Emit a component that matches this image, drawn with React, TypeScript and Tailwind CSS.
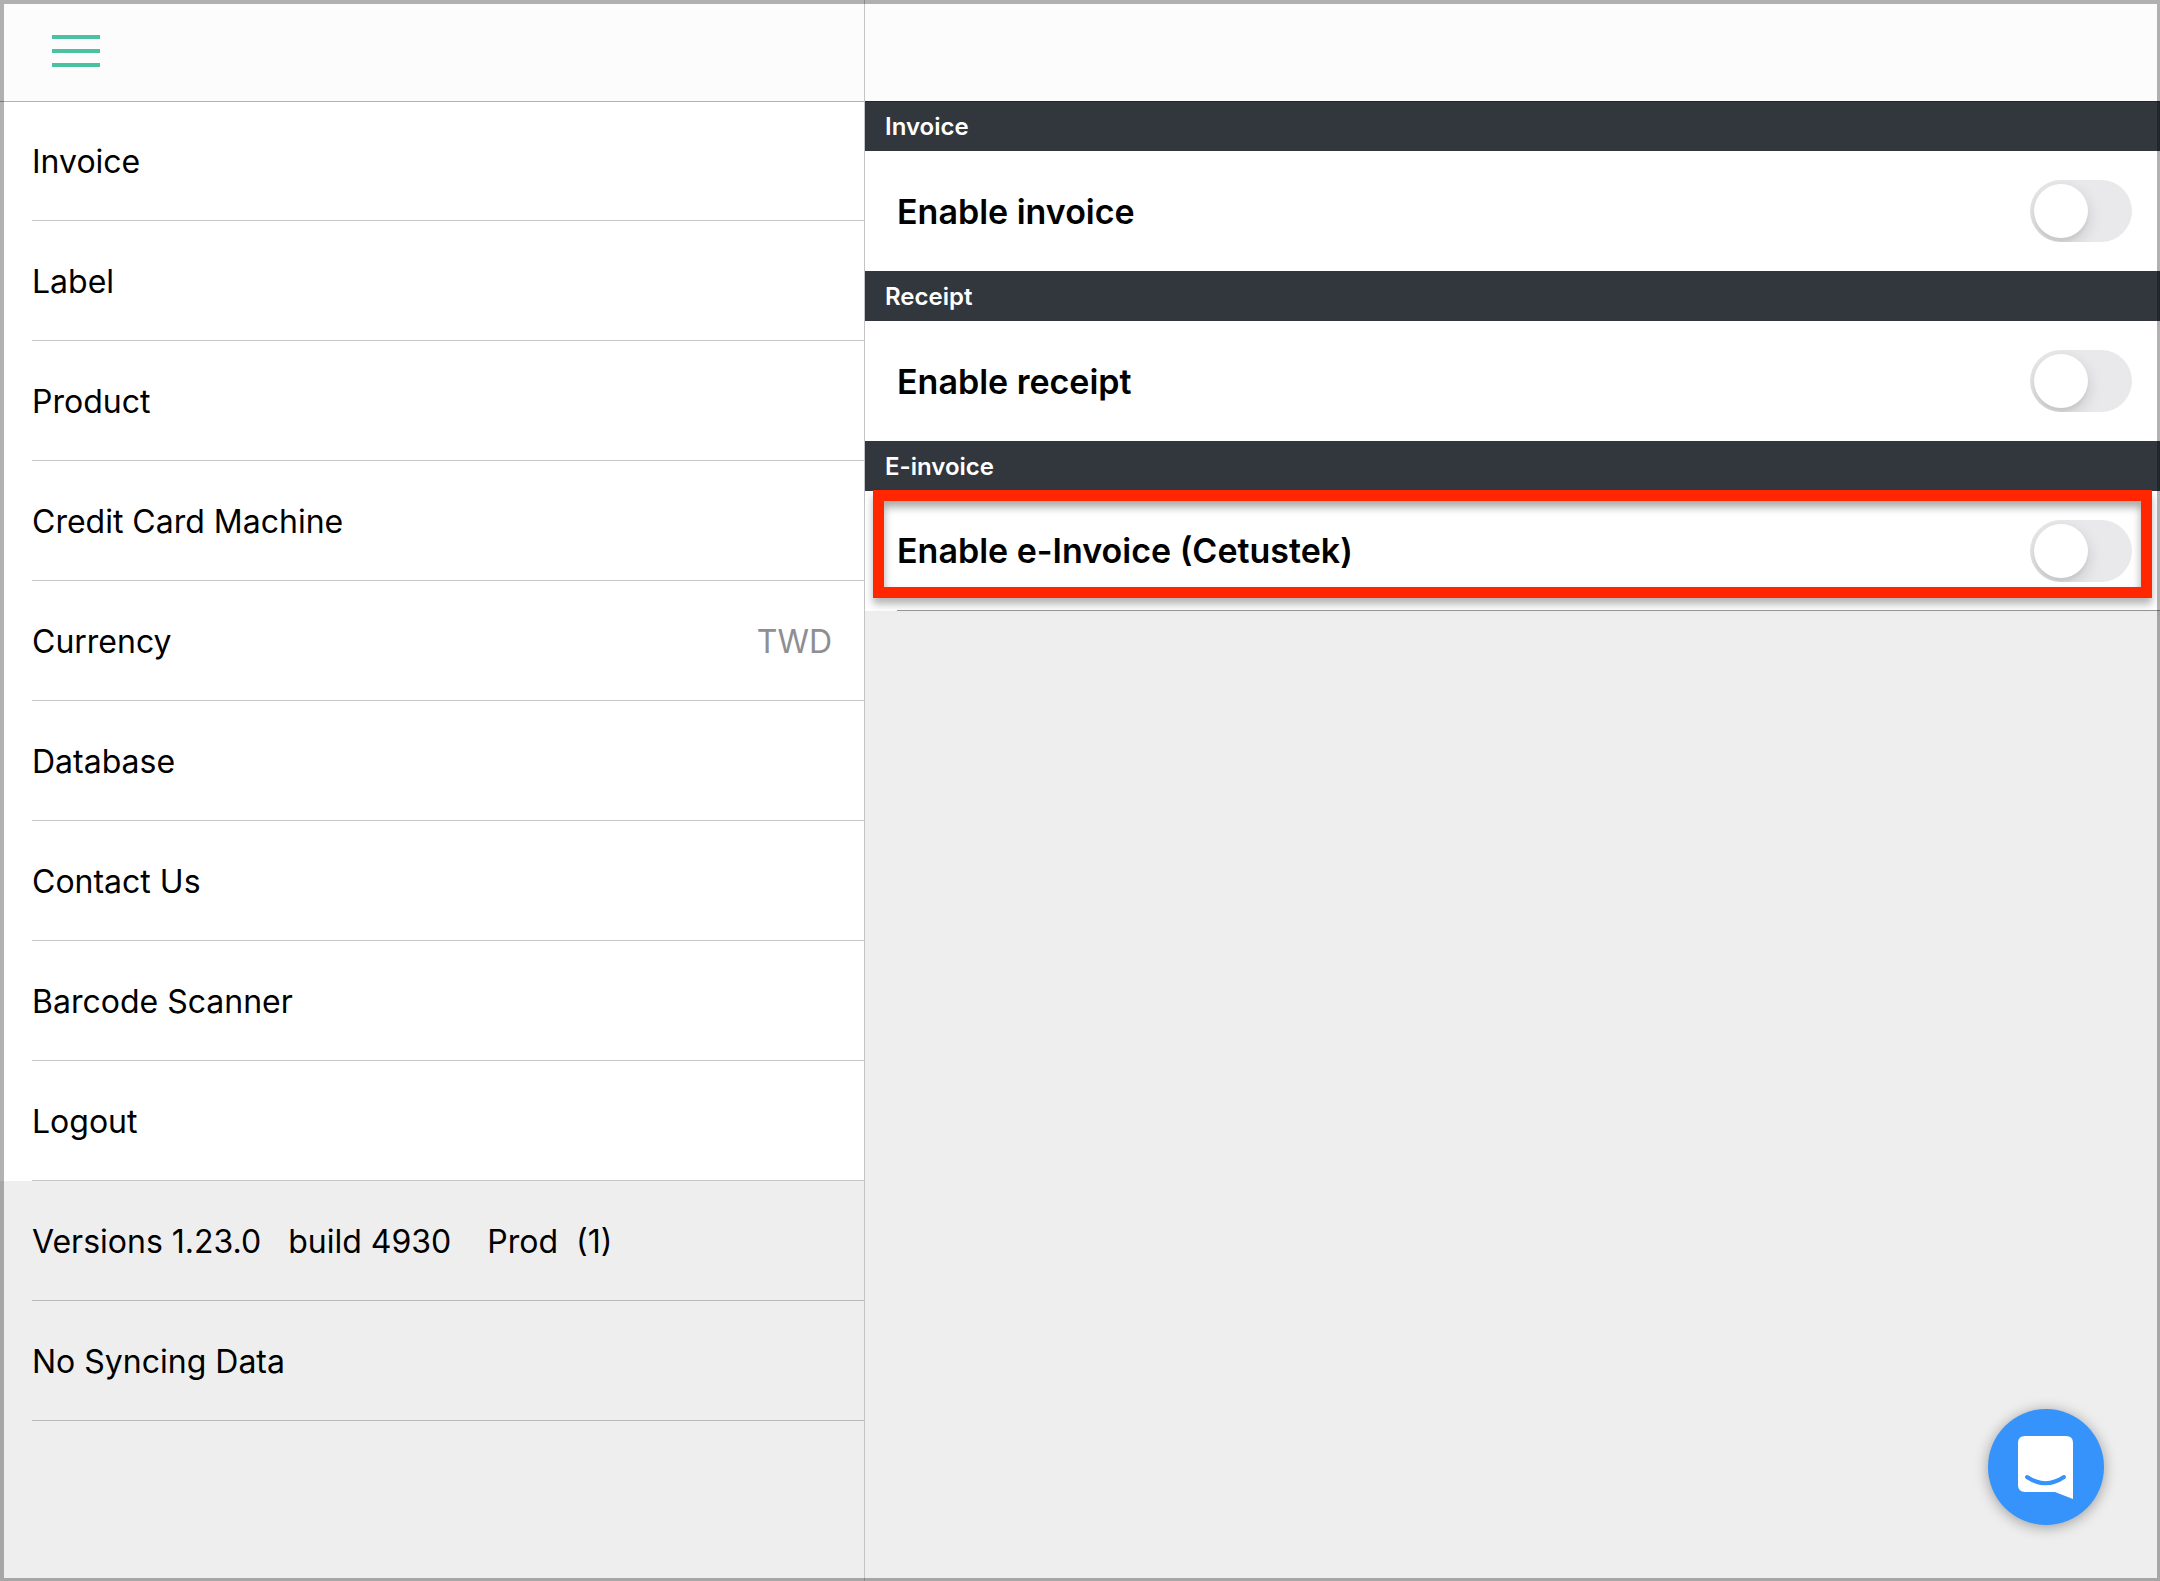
import { useState } from "react";

const menuItems: { label: string; value?: string }[] = [
  { label: "Invoice" },
  { label: "Label" },
  { label: "Product" },
  { label: "Credit Card Machine" },
  { label: "Currency", value: "TWD" },
  { label: "Database" },
  { label: "Contact Us" },
  { label: "Barcode Scanner" },
  { label: "Logout" },
];

const infoItems = ["Versions 1.23.0   build 4930    Prod  (1)", "No Syncing Data"];

const sections = [
  { title: "Invoice", label: "Enable invoice" },
  { title: "Receipt", label: "Enable receipt" },
  { title: "E-invoice", label: "Enable e-Invoice (Cetustek)", highlighted: true },
];

function MenuButton() {
  return (
    <button type="button" aria-label="Menu" className="flex w-12 flex-col gap-2.5">
      <span className="h-1 bg-[#4ac2a2]" />
      <span className="h-1 bg-[#4ac2a2]" />
      <span className="h-1 bg-[#4ac2a2]" />
    </button>
  );
}

function MenuRow({ label, value }: { label: string; value?: string }) {
  return (
    <li className="pl-8">
      <button
        type="button"
        className="flex h-30 w-full items-center justify-between border-b border-black/22 pt-0.5 pr-8 text-left"
      >
        <span>{label}</span>
        {value && <span className="text-[#8e8e93]">{value}</span>}
      </button>
    </li>
  );
}

function Toggle({ id }: { id: string }) {
  const [on, setOn] = useState(false);
  return (
    <span className="relative block h-[62px] w-[102px] shrink-0 overflow-hidden rounded-full bg-[#e9e9eb] has-checked:bg-[#4ac2a2]">
      <input
        id={id}
        type="checkbox"
        role="switch"
        checked={on}
        onChange={(e) => setOn(e.target.checked)}
        className="peer absolute inset-0 m-0 cursor-pointer appearance-none"
      />
      <span className="pointer-events-none absolute top-1 left-1 size-[54px] rounded-full bg-white shadow-[0_6px_16px_rgba(0,0,0,0.15),0_4px_3px_rgba(0,0,0,0.04)] peer-checked:left-11" />
    </span>
  );
}

function Section({
  title,
  label,
  highlighted,
}: {
  title: string;
  label: string;
  highlighted?: boolean;
}) {
  const id = `toggle-${title.toLowerCase()}`;
  return (
    <section>
      <h2 className="flex h-[50px] items-center bg-[#32363d] px-5 pt-0.5 text-2xl font-semibold text-white">
        {title}
      </h2>
      <div className="relative bg-white pl-8">
        <div
          className={
            highlighted
              ? "flex h-30 items-center justify-between border-b border-[#98989d] pr-7"
              : "flex h-30 items-center justify-between pr-7"
          }
        >
          <label htmlFor={id} className="text-[34px] font-semibold">
            {label}
          </label>
          <Toggle id={id} />
        </div>
        {highlighted && (
          <div className="pointer-events-none absolute -top-px right-2 bottom-[13px] left-2 border-[11px] border-[#ff2600] shadow-[0_6px_8px_rgba(0,0,0,0.3),inset_0_6px_8px_rgba(0,0,0,0.35)]" />
        )}
      </div>
    </section>
  );
}

function ChatButton() {
  return (
    <button
      type="button"
      aria-label="Open chat"
      className="fixed right-14 bottom-14 flex size-29 items-center justify-center rounded-full bg-[#3693fc] shadow-[0_2px_14px_rgba(0,0,0,0.35)]"
    >
      <svg viewBox="0 0 116 116" className="size-29" fill="none" aria-hidden="true">
        <path
          d="M37 27H78Q85 27 85 34V90L67 83H37Q30 83 30 76V34Q30 27 37 27Z"
          fill="#fff"
        />
        <path
          d="M39 68C51 76 64 76 76 68"
          stroke="#3693fc"
          strokeWidth="4"
          strokeLinecap="round"
        />
      </svg>
    </button>
  );
}

export default function App() {
  return (
    <div className="relative flex min-h-screen bg-[#eeeeee] font-[Inter,sans-serif] text-black">
      <aside className="w-2/5">
        <header className="relative flex h-[101px] items-center bg-[#fcfcfc] px-13 pt-px shadow-[0_1px_0_rgba(0,0,0,0.3)]">
          <MenuButton />
        </header>
        <nav className="text-[32px]">
          <ul className="bg-white">
            {menuItems.map((item) => (
              <MenuRow key={item.label} label={item.label} value={item.value} />
            ))}
          </ul>
          <ul>
            {infoItems.map((text) => (
              <li key={text} className="pl-8">
                <p className="flex h-30 items-center border-b border-black/22 pt-0.5 whitespace-pre">
                  {text}
                </p>
              </li>
            ))}
          </ul>
        </nav>
      </aside>
      <main className="w-3/5 border-l border-[#c4c4c6]">
        <header className="relative h-[101px] bg-[#fcfcfc] shadow-[0_1px_0_rgba(0,0,0,0.3)]" />
        {sections.map((section) => (
          <Section key={section.title} {...section} />
        ))}
      </main>
      <ChatButton />
      <div className="pointer-events-none absolute inset-0 border-t-4 border-r-3 border-b-3 border-l-4 border-black/30" />
    </div>
  );
}
